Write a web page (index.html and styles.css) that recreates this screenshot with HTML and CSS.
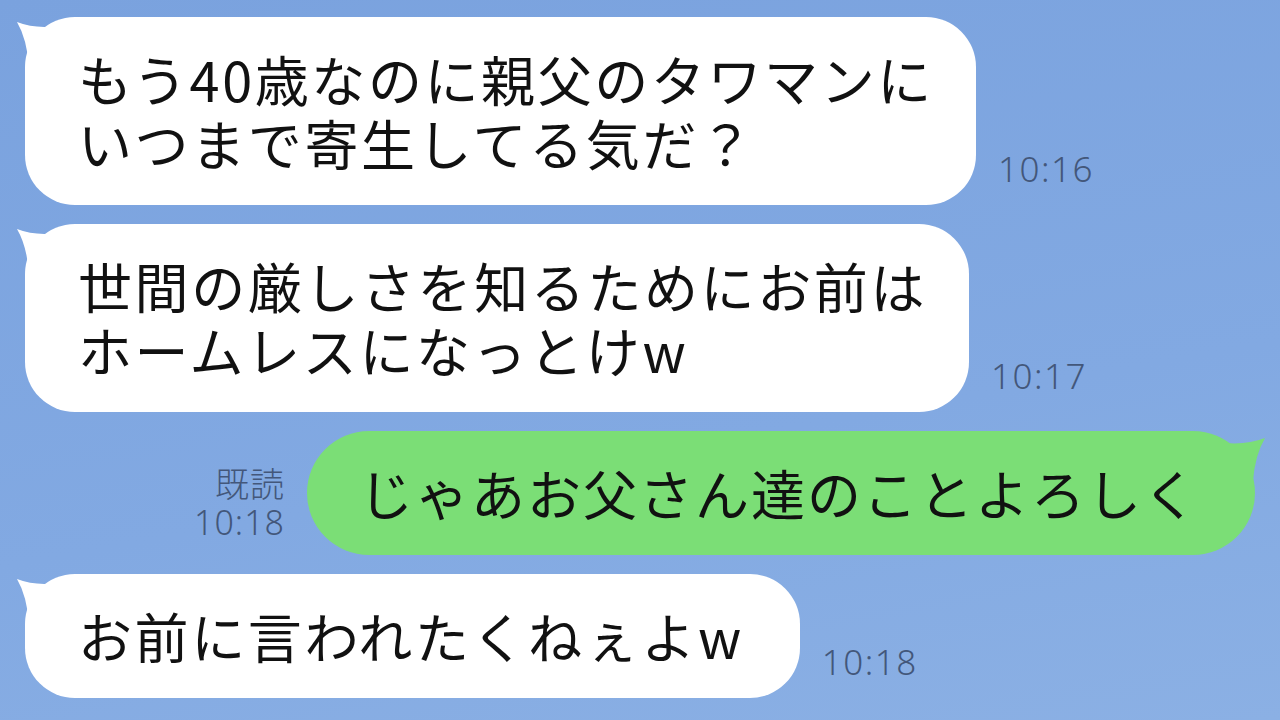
FILE: index.html
```html
<!DOCTYPE html>
<html lang="ja">
<head>
  <meta charset="UTF-8">
  <meta name="viewport" content="width=device-width, initial-scale=1.0">
  <title>トーク</title>
  <link rel="stylesheet" href="styles.css">
</head>
<body>
<div class="chat">

  <div class="row left">
    <div class="bubble white">
      <svg class="tail" viewBox="0 0 50 60" width="50" height="60"><path d="M2 5 Q20 12 42 9 L42 50 L14 50 Q12 22 2 5 Z"/></svg>
      <p>もう40歳なのに親父のタワマンに<br>いつまで寄生してる気だ？</p>
    </div>
    <div class="meta"><span>10:16</span></div>
  </div>

  <div class="row left">
    <div class="bubble white">
      <svg class="tail" viewBox="0 0 50 60" width="50" height="60"><path d="M2 5 Q20 12 42 9 L42 50 L14 50 Q12 22 2 5 Z"/></svg>
      <p>世間の厳しさを知るためにお前は<br>ホームレスになっとけw</p>
    </div>
    <div class="meta"><span>10:17</span></div>
  </div>

  <div class="row right">
    <div class="meta"><span>既読</span><span>10:18</span></div>
    <div class="bubble green">
      <svg class="tail" viewBox="0 0 50 60" width="50" height="60"><path d="M48 7 Q30 14 8 12 L8 50 L36 50 Q38 24 48 7 Z"/></svg>
      <p>じゃあお父さん達のことよろしく</p>
    </div>
  </div>

  <div class="row left">
    <div class="bubble white short">
      <svg class="tail" viewBox="0 0 50 60" width="50" height="60"><path d="M2 5 Q20 12 42 9 L42 50 L14 50 Q12 22 2 5 Z"/></svg>
      <p>お前に言われたくねぇよw</p>
    </div>
    <div class="meta"><span>10:18</span></div>
  </div>

</div>
</body>
</html>
```

FILE: styles.css
```css
html, body {
  margin: 0;
  padding: 0;
}

body {
  width: 1280px;
  height: 720px;
  overflow: hidden;
  background: linear-gradient(170deg, #7aa2de 0%, #82a9e2 60%, #8bb0e4 100%);
  font-family: "Noto Sans CJK JP", "Noto Sans", sans-serif;
}

.chat {
  display: flex;
  flex-direction: column;
  gap: 19px;
  padding: 17px 25px 0 25px;
}

.row {
  display: flex;
  align-items: flex-end;
  gap: 22px;
}

.row.right {
  justify-content: flex-end;
}

.bubble {
  position: relative;
  border-radius: 50px;
  padding: 30px 42px 30px 53px;
}

.bubble p {
  position: relative;
  margin: 0;
  font-size: 54px;
  line-height: 64px;
  letter-spacing: 2.6px;
  color: #111;
  white-space: nowrap;
}

.bubble.white {
  background-color: #fff;
}

.bubble.short {
  padding-right: 56px;
}

.bubble.white .tail {
  position: absolute;
  left: -10px;
  top: 0;
  fill: #fff;
}

.bubble.green {
  background-color: #7bde76;
  border-radius: 62px;
  padding: 30px 56px 30px 52px;
}

.bubble.green p {
  letter-spacing: 2px;
}

.bubble.green .tail {
  position: absolute;
  right: -12px;
  top: 0;
  fill: #7bde76;
}

.meta {
  display: flex;
  flex-direction: column;
  align-items: flex-end;
  padding-bottom: 17px;
  font-family: "Noto Sans", "Noto Sans CJK JP", sans-serif;
  font-weight: 300;
  font-size: 35px;
  line-height: 38px;
  letter-spacing: 1.5px;
  color: #43577a;
}

.row.right .meta {
  font-size: 34px;
  letter-spacing: 1px;
  padding-bottom: 14px;
}
```
